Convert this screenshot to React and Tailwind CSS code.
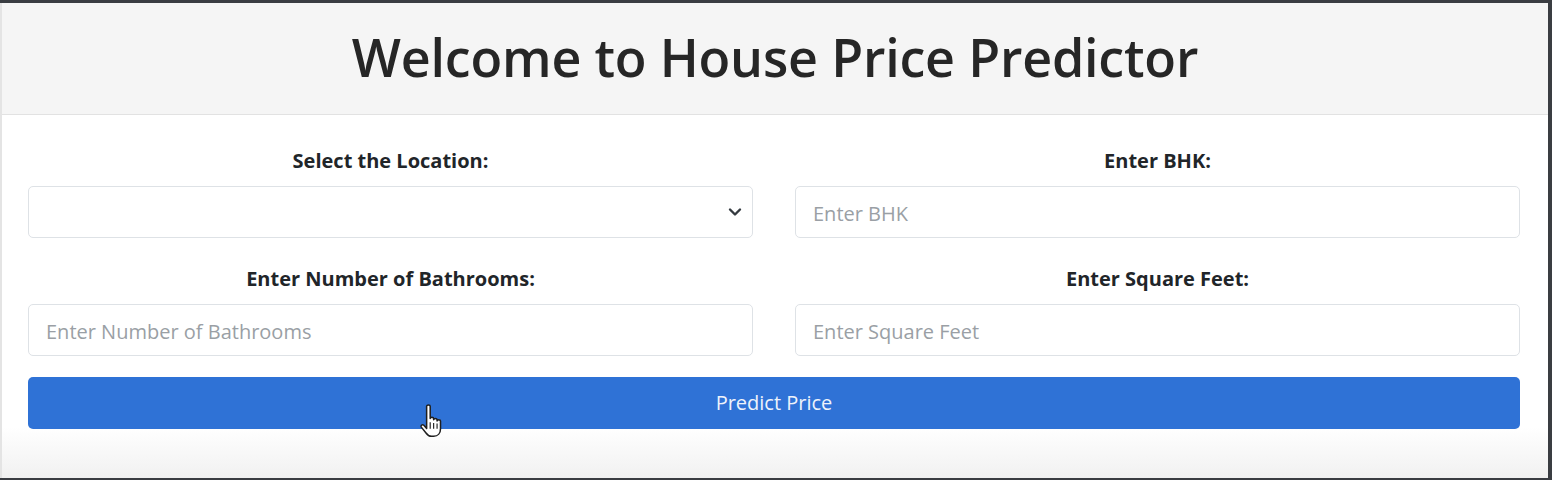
import React from "react";

function Cursor() {
  return (
    <svg width="28" height="36" viewBox="0 0 22 28" className="absolute left-[417px] top-[400px]">
      <path
        d="M6 2.5c0-1.4 2.8-1.4 2.8 0v9.5c0-1.3 2.7-1.3 2.7 0v1c0-1.3 2.7-1.3 2.7 0v1c0-1.3 2.7-1.3 2.7 0v6c0 3.4-2 6-5.4 6H9.8c-2 0-3.2-1-4.3-2.6L1.8 18.8c-0.8-1.3 0.9-2.6 2-1.4L6 19.8Z"
        fill="#fff"
        stroke="#1f1f1f"
        strokeWidth="1.2"
        strokeLinejoin="round"
      />
      <path d="M8.8 15v5M11.5 15.5v4.5M14.2 16v4" stroke="#1f1f1f" strokeWidth="0.9" />
    </svg>
  );
}

function Field({ label, placeholder, select }) {
  return (
    <div className="flex flex-col items-stretch">
      <div className="text-center text-[20px] font-bold text-[#212529] leading-[27px] mb-[12px]">{label}</div>
      {select ? (
        <div className="h-[52px] rounded-[5px] border border-[#dee2e6] bg-white flex items-center justify-end pr-[10px]">
          <svg width="14" height="10" viewBox="0 0 14 10">
            <path d="M2 2.5l5 5 5-5" fill="none" stroke="#343a40" strokeWidth="2.4" strokeLinecap="round" strokeLinejoin="round" />
          </svg>
        </div>
      ) : (
        <div className="h-[52px] rounded-[5px] border border-[#dee2e6] bg-white flex items-center px-[17px] pt-[3px] text-[20px] text-[#9a9fa5]">
          {placeholder}
        </div>
      )}
    </div>
  );
}

export default function App() {
  return (
    <div className="w-[1552px] h-[480px] bg-[#3a3d42] pt-[3px] pr-[4px] pb-[2px] overflow-hidden" style={{ fontFamily: '"Open Sans", "Noto Sans", sans-serif' }}>
      <div className="relative h-full bg-white border-l-[2px] border-[#e4e4e4] flex flex-col">
        <div className="h-[112px] bg-[#f5f5f5] border-b border-[#e2e2e2] flex items-center justify-center">
          <h1 className="text-[52px] font-semibold text-[#262626] tracking-[-0.2px] leading-none pb-[4px]">Welcome to House Price Predictor</h1>
        </div>
        <div className="flex-1 pl-[26px] pr-[28px] pt-[32px] bg-gradient-to-b from-white from-[86%] to-[#f1f1f1]">
          <div className="grid grid-cols-2 gap-x-[42px] gap-y-[27px]">
            <Field label="Select the Location:" select />
            <Field label="Enter BHK:" placeholder="Enter BHK" />
            <Field label="Enter Number of Bathrooms:" placeholder="Enter Number of Bathrooms" />
            <Field label="Enter Square Feet:" placeholder="Enter Square Feet" />
          </div>
          <button className="mt-[21px] w-full h-[52px] rounded-[5px] bg-[#2f72d6] text-[#eef3fb] text-[20px] flex items-center justify-center">
            Predict Price
          </button>
        </div>
        <Cursor />
      </div>
    </div>
  );
}
